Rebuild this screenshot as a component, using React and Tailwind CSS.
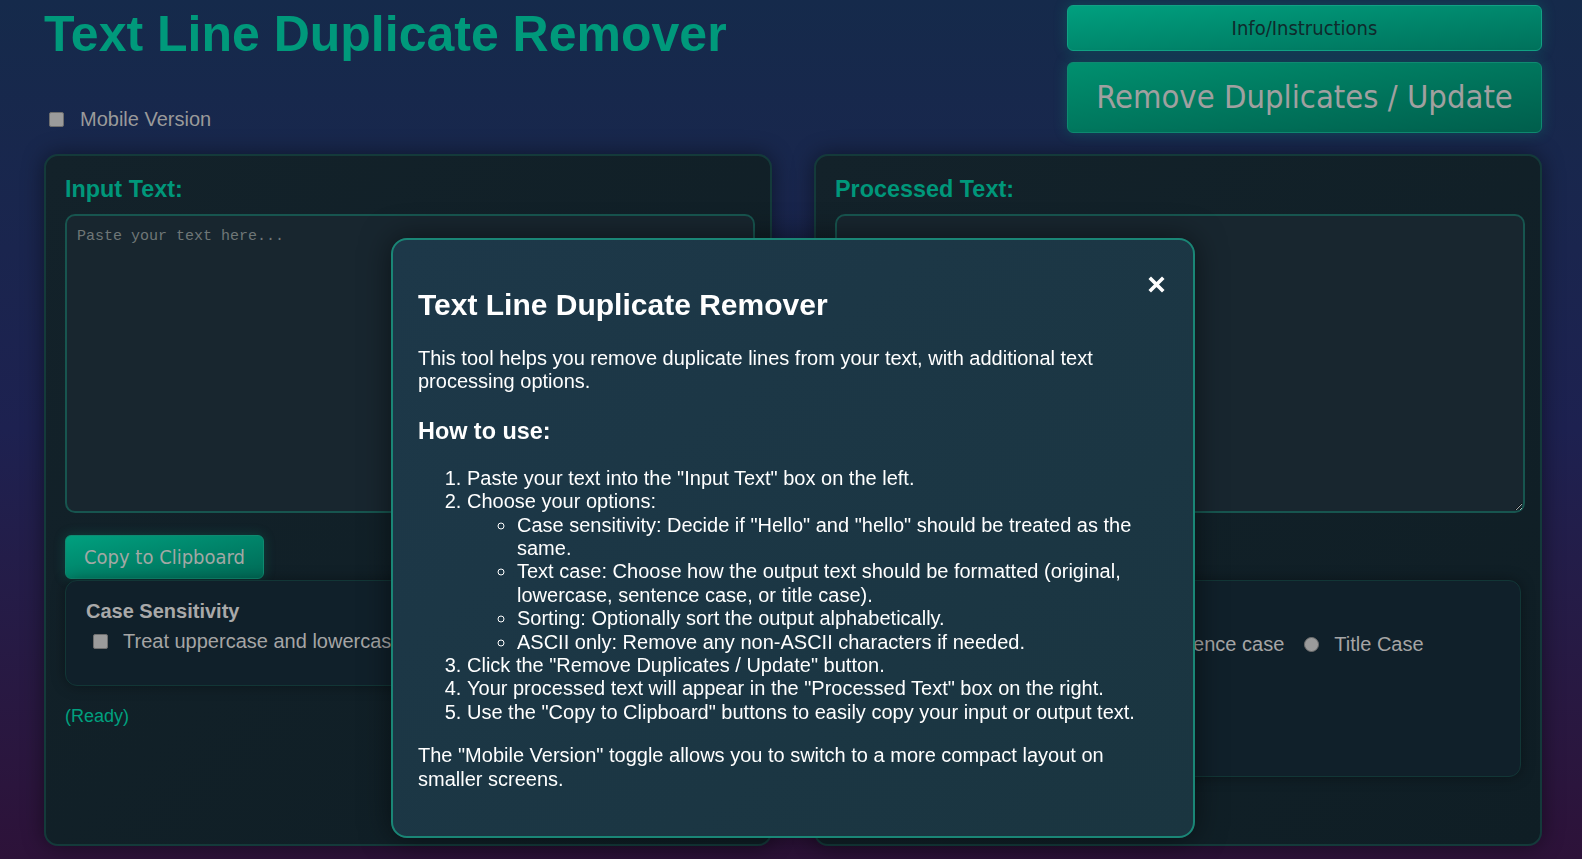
import React, { useState } from "react";

const sans = "font-['Liberation_Sans',Arial,sans-serif]";
const btnFont = "font-['DejaVu_Sans_Condensed',Roboto,sans-serif]";

const Checkbox = ({ className = "" }) => (
  <input
    type="checkbox"
    className={`appearance-none w-[15px] h-[15px] shrink-0 rounded-[2px] bg-[#9b9b9b] border border-[#6e6e6e] ${className}`}
  />
);

const Radio = ({ name }) => (
  <input
    type="radio"
    name={name}
    className="appearance-none w-[15px] h-[15px] shrink-0 rounded-full bg-[#9b9b9b] border border-[#6e6e6e] ml-[7px] mr-[15px]"
  />
);

const CopyButton = () => (
  <button
    className={`${btnFont} mt-[22px] h-[44px] px-[18px] self-start rounded-[6px] border border-[#0f8a70] bg-gradient-to-br from-[#00a07f] to-[#006a56] text-[20px] text-[#a3a8a5] shadow-[0_0_12px_rgba(0,160,127,0.25)]`}
  >
    Copy to Clipboard
  </button>
);

const App = () => {
  const [input, setInput] = useState("");
  const [output] = useState("");
  const [showInfo, setShowInfo] = useState(true);

  return (
    <div
      className={`${sans} min-h-[859px] bg-gradient-to-b from-[#152a4b] via-[#1d2150] to-[#2d1239] pt-[5px] pl-[44px] pr-[40px] pb-[13px] text-[20px]`}
    >
      {/* Header */}
      <div className="flex justify-between items-start">
        <div>
          <h1 className="mt-[1px] text-[50px] leading-[56px] font-bold text-[#00997b]">
            Text Line Duplicate Remover
          </h1>
          <label className="mt-[46px] h-[23px] flex items-center text-[#9a9a9a] leading-[23px]">
            <Checkbox className="ml-[5px] mr-[16px]" />
            Mobile Version
          </label>
        </div>
        <div className="w-[475px] flex flex-col gap-[11px]">
          <button
            onClick={() => setShowInfo(true)}
            className={`${btnFont} h-[46px] rounded-[6px] border border-[#12a184] bg-gradient-to-br from-[#00a07f] to-[#00715b] text-[20px] text-[#0f2a2c] shadow-[0_0_14px_rgba(0,160,127,0.3)]`}
          >
            Info/Instructions
          </button>
          <button
            className={`${btnFont} h-[71px] rounded-[6px] border border-[#0f8a70] bg-gradient-to-br from-[#00906f] to-[#005e4c] text-[32.5px] text-[#a0a0a0] shadow-[0_0_14px_rgba(0,160,127,0.3)]`}
          >
            Remove Duplicates / Update
          </button>
        </div>
      </div>

      {/* Panels */}
      <div className="mt-[21px] grid grid-cols-2 gap-[42px]">
        <div className="h-[692px] flex flex-col rounded-[14px] border-2 border-[#143a3a] bg-gradient-to-br from-[#13222a] to-[#0f1e25] pl-[19px] pr-[15px] pt-[20px] shadow-[0_0_22px_rgba(0,0,0,0.45)]">
          <h3 className="text-[23.4px] leading-[27px] font-bold text-[#00977a] mb-[11px]">Input Text:</h3>
          <textarea
            value={input}
            onChange={(e) => setInput(e.target.value)}
            placeholder="Paste your text here..."
            className="h-[299px] w-full rounded-[10px] border-2 border-[#17554f] bg-[#18262f] px-[10px] py-[10px] font-['Liberation_Mono',monospace] text-[15px] text-[#cfd8d8] placeholder:text-[#6f7777] outline-none"
          />
          <CopyButton />
          <div className="mt-[1px] mr-[4px] h-[106px] rounded-[12px] border border-[#123636] bg-[#10202a] px-[20px] pt-[19px] shadow-[0_0_14px_rgba(0,0,0,0.35)]">
            <h4 className="font-bold text-[#a9a9a9] leading-[23px]">Case Sensitivity</h4>
            <label className="mt-[7px] flex items-center leading-[23px] text-[#a5a5a5]">
              <Checkbox className="ml-[7px] mr-[15px]" />
              Treat uppercase and lowercase as the same
            </label>
          </div>
          <p className="mt-[20px] text-[18px] leading-[21px] text-[#00a07f]">(Ready)</p>
        </div>

        <div className="h-[692px] flex flex-col rounded-[14px] border-2 border-[#143a3a] bg-gradient-to-br from-[#13222a] to-[#0f1e25] pl-[19px] pr-[15px] pt-[20px] shadow-[0_0_22px_rgba(0,0,0,0.45)]">
          <h3 className="text-[23.4px] leading-[27px] font-bold text-[#00977a] mb-[11px]">Processed Text:</h3>
          <textarea
            value={output}
            readOnly
            className="h-[299px] w-full rounded-[10px] border-2 border-[#17554f] bg-[#18262f] px-[10px] py-[10px] font-['Liberation_Mono',monospace] text-[15px] text-[#cfd8d8] outline-none"
          />
          <CopyButton />
          <div className="mt-[1px] mr-[4px] h-[197px] rounded-[12px] border border-[#123636] bg-[#10202a] px-[20px] pt-[19px] shadow-[0_0_14px_rgba(0,0,0,0.35)]">
            <h4 className="font-bold text-[#a9a9a9] leading-[23px]">Text Case</h4>
            <div className="mt-[10px] flex items-center leading-[23px] text-[#a5a5a5]">
              <label className="flex items-center mr-[13px]"><Radio name="case" />Original</label>
              <label className="flex items-center mr-[13px]"><Radio name="case" />lowercase</label>
              <label className="flex items-center mr-[13px]"><Radio name="case" />Sentence case</label>
              <label className="flex items-center mr-[13px]"><Radio name="case" />Title Case</label>
            </div>
            <label className="mt-[12px] flex items-center leading-[23px] text-[#a5a5a5]">
              <Checkbox className="ml-[7px] mr-[15px]" />
              Sort alphabetically
            </label>
            <label className="mt-[12px] flex items-center leading-[23px] text-[#a5a5a5]">
              <Checkbox className="ml-[7px] mr-[15px]" />
              ASCII only
            </label>
          </div>
        </div>
      </div>

      {/* Info modal */}
      {showInfo && (
        <div className="fixed left-[391px] top-[238px] w-[804px] rounded-[16px] border-2 border-[#1a8676] bg-gradient-to-br from-[#1d3849] to-[#1a3540] p-[25px] text-white shadow-[0_0_30px_rgba(0,0,0,0.5)]">
          <button
            onClick={() => setShowInfo(false)}
            className="absolute top-[36px] right-[28px] w-[17px] h-[17px]"
          >
            <svg viewBox="0 0 17 17" className="w-[17px] h-[17px]">
              <path d="M3 3 L14 14 M14 3 L3 14" stroke="#ffffff" strokeWidth="3.6" strokeLinecap="square" />
            </svg>
          </button>
          <h2 className="mt-[23px] mb-[25px] text-[30px] leading-[34px] font-bold">Text Line Duplicate Remover</h2>
          <p className="mb-[24px] leading-[23.4px]">
            This tool helps you remove duplicate lines from your text, with additional text processing options.
          </p>
          <h3 className="mb-[22px] text-[23.4px] leading-[27px] font-bold">How to use:</h3>
          <ol className="list-decimal pl-[49px] mb-[20px] leading-[23.4px]">
            <li>Paste your text into the "Input Text" box on the left.</li>
            <li>
              Choose your options:
              <ul className="list-[circle] pl-[50px]">
                <li>Case sensitivity: Decide if "Hello" and "hello" should be treated as the same.</li>
                <li>Text case: Choose how the output text should be formatted (original, lowercase, sentence case, or title case).</li>
                <li>Sorting: Optionally sort the output alphabetically.</li>
                <li>ASCII only: Remove any non-ASCII characters if needed.</li>
              </ul>
            </li>
            <li>Click the "Remove Duplicates / Update" button.</li>
            <li>Your processed text will appear in the "Processed Text" box on the right.</li>
            <li>Use the "Copy to Clipboard" buttons to easily copy your input or output text.</li>
          </ol>
          <p className="mb-[20px] leading-[23.4px]">
            The "Mobile Version" toggle allows you to switch to a more compact layout on smaller screens.
          </p>
        </div>
      )}
    </div>
  );
};

export default App;
